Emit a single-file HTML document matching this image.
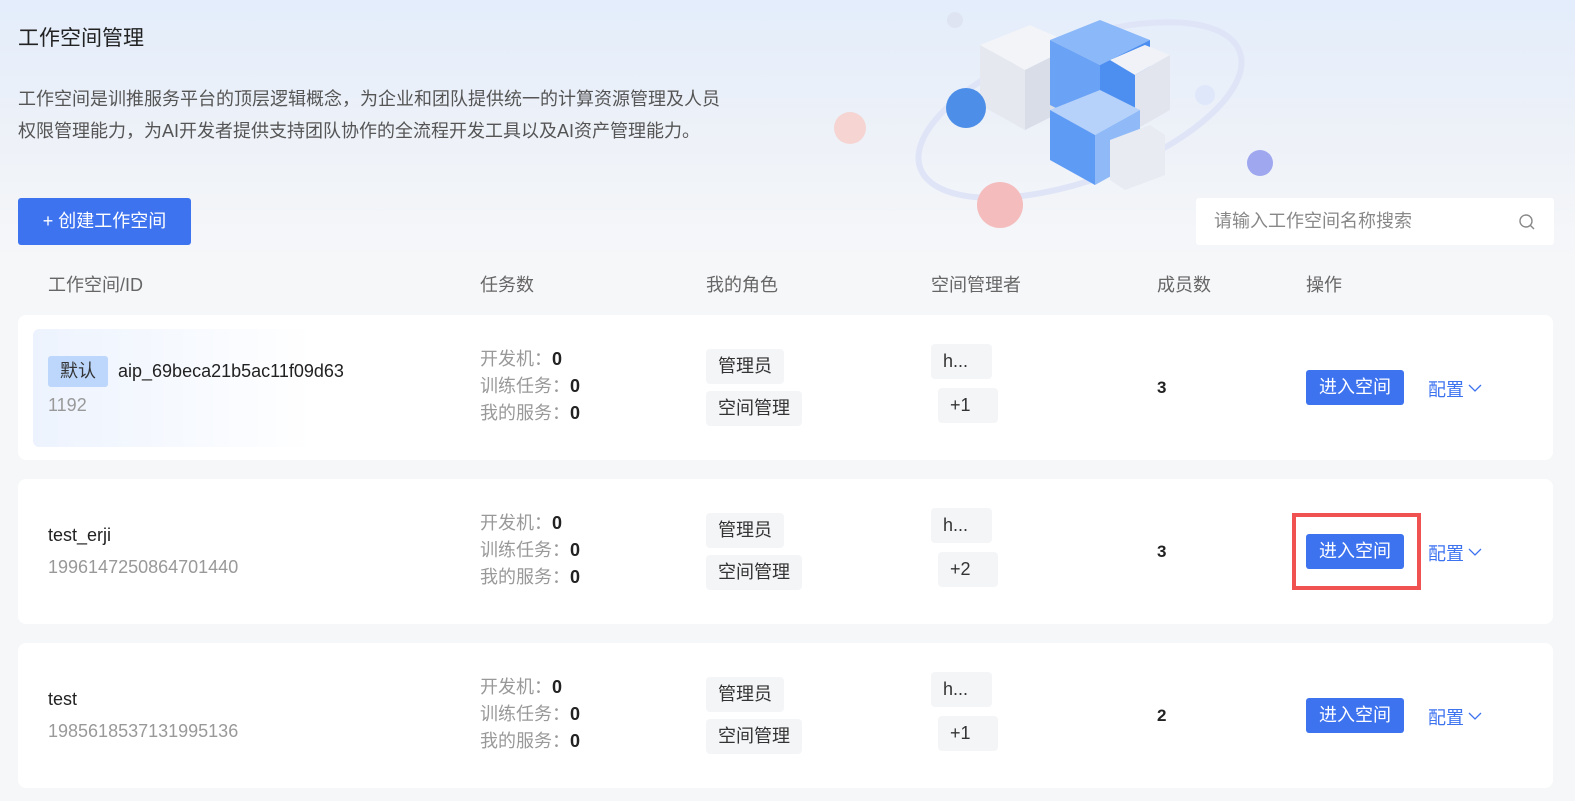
<!DOCTYPE html>
<html><head><meta charset="utf-8"><style>
*{margin:0;padding:0;box-sizing:border-box}
body{width:1575px;height:801px;overflow:hidden;background:#f6f7f9;font-family:"Liberation Sans","Noto Sans CJK SC",sans-serif;color:#333;position:relative}
.hdr{position:absolute;left:0;top:0;width:1575px;height:260px;background:linear-gradient(180deg,#e3edfb 0%,#edf1f8 50%,#f6f7f9 100%)}
.abs{position:absolute}
.title{left:18px;top:22px;font-size:21px;color:#222}
.desc{left:18px;top:83px;font-size:18px;line-height:32px;color:#555}
.btn{left:18px;top:198px;width:173px;height:47px;background:#3e73f0;color:#fff;border-radius:3px;font-size:18px;line-height:47px;text-align:center}
.search{left:1196px;top:198px;width:358px;height:47px;background:#fff;border-radius:3px;font-size:18px;color:#888;line-height:47px;padding-left:18px}
.th{top:271px;font-size:18px;color:#666}
.card{position:absolute;left:18px;width:1535px;height:145px;background:#fff;border-radius:8px}
.name{position:absolute;left:30px;font-size:18px;color:#222}
.id{position:absolute;left:30px;font-size:18px;color:#999}
.stats{position:absolute;left:462px;font-size:18px;line-height:27px;color:#999}
.stats b{color:#222}
.tag{position:absolute;background:#f4f5f7;border-radius:4px;font-size:18px;color:#333;height:35px;line-height:35px;padding:0 12px}
.num{position:absolute;left:1139px;font-size:17px;font-weight:bold;color:#222}
.enter{position:absolute;left:1288px;width:98px;height:35px;background:#3e73f0;color:#fff;border-radius:3px;font-size:18px;line-height:35px;text-align:center}
.cfg{position:absolute;left:1410px;font-size:18px;color:#3e73f0}
.cfg svg{vertical-align:middle;margin-left:4px;margin-top:-6px}
</style></head><body>
<div class="hdr"></div>
<svg class="abs" style="left:820px;top:0" width="470" height="240">
<ellipse cx="260" cy="110" rx="170" ry="70" fill="none" stroke="#dfe5f7" stroke-width="6" transform="rotate(-20 260 110)"/>
<polygon points="160,45 210,25 255,45 205,70" fill="#f3f4f8"/><polygon points="160,45 205,70 205,130 160,105" fill="#e6e8f0"/><polygon points="205,70 255,45 255,105 205,130" fill="#d9dde8"/>
<polygon points="230,40 280,20 330,40 280,65" fill="#8ab8f8"/><polygon points="230,40 280,65 280,130 230,105" fill="#6aa3f5"/><polygon points="280,65 330,40 330,105 280,130" fill="#4d8ff0"/>
<polygon points="290,60 325,45 350,55 315,75" fill="#f0f2f7"/><polygon points="315,75 350,55 350,110 315,130" fill="#e2e5ee"/>
<polygon points="230,110 280,90 320,110 275,135" fill="#b6d2fb"/><polygon points="230,110 275,135 275,185 230,160" fill="#5e9bf5"/><polygon points="275,135 320,110 320,160 275,185" fill="#8fbaf7"/>
<polygon points="290,140 330,125 345,135 345,175 305,190 290,180" fill="#e8ebf2"/>
<circle cx="146" cy="108" r="20" fill="#4d8fe8"/><circle cx="180" cy="205" r="23" fill="#f4bcbc"/><circle cx="30" cy="128" r="16" fill="#f5d4d2"/><circle cx="440" cy="163" r="13" fill="#9fa8ef"/><circle cx="385" cy="95" r="10" fill="#dfe8fb"/><circle cx="135" cy="20" r="8" fill="#dfe4f3"/>
</svg>
<div class="abs title">工作空间管理</div>
<div class="abs desc">工作空间是训推服务平台的顶层逻辑概念，为企业和团队提供统一的计算资源管理及人员<br>权限管理能力，为AI开发者提供支持团队协作的全流程开发工具以及AI资产管理能力。</div>
<div class="abs btn">+ 创建工作空间</div>
<div class="abs search">请输入工作空间名称搜索<svg style="position:absolute;right:18px;top:15px" width="18" height="18"><circle cx="8" cy="8" r="6" fill="none" stroke="#888" stroke-width="1.4"/><line x1="12.5" y1="12.5" x2="16" y2="16" stroke="#888" stroke-width="1.4"/></svg></div>
<div class="abs th" style="left:48px">工作空间/ID</div>
<div class="abs th" style="left:480px">任务数</div>
<div class="abs th" style="left:706px">我的角色</div>
<div class="abs th" style="left:931px">空间管理者</div>
<div class="abs th" style="left:1157px">成员数</div>
<div class="abs th" style="left:1306px">操作</div>

<div class="card" style="top:315px">
<div style="position:absolute;left:15px;top:14px;width:280px;height:118px;border-radius:6px;background:linear-gradient(90deg,#edf3fe,#fff)"></div>
<div style="position:absolute;left:30px;top:41px;width:60px;height:31px;background:#bcd6fc;border-radius:3px;font-size:18px;line-height:31px;text-align:center">默认</div>
<div class="name" style="left:100px;top:46px">aip_69beca21b5ac11f09d63</div>
<div class="id" style="top:80px">1192</div>
<div class="stats" style="top:31px">开发机：<b>0</b><br>训练任务：<b>0</b><br>我的服务：<b>0</b></div>
<div class="tag" style="left:688px;top:34px">管理员</div><div class="tag" style="left:688px;top:76px">空间管理</div>
<div class="tag" style="left:913px;top:29px;width:61px">h...</div><div class="tag" style="left:920px;top:73px;width:60px">+1</div>
<div class="num" style="top:63px">3</div>
<div class="enter" style="top:55px">进入空间</div><div class="cfg" style="top:61px">配置<svg width="14" height="8"><path d="M1 1 L7 7 L13 1" fill="none" stroke="#3e73f0" stroke-width="1.3"/></svg></div>
</div>

<div class="card" style="top:479px">
<div class="name" style="top:46px">test_erji</div>
<div class="id" style="top:78px">1996147250864701440</div>
<div class="stats" style="top:31px">开发机：<b>0</b><br>训练任务：<b>0</b><br>我的服务：<b>0</b></div>
<div class="tag" style="left:688px;top:34px">管理员</div><div class="tag" style="left:688px;top:76px">空间管理</div>
<div class="tag" style="left:913px;top:29px;width:61px">h...</div><div class="tag" style="left:920px;top:73px;width:60px">+2</div>
<div class="num" style="top:63px">3</div>
<div class="enter" style="top:55px">进入空间</div><div class="cfg" style="top:61px">配置<svg width="14" height="8"><path d="M1 1 L7 7 L13 1" fill="none" stroke="#3e73f0" stroke-width="1.3"/></svg></div>
</div>
<div class="abs" style="left:1292px;top:513px;width:129px;height:77px;border:4px solid #f05252"></div>

<div class="card" style="top:643px">
<div class="name" style="top:46px">test</div>
<div class="id" style="top:78px">1985618537131995136</div>
<div class="stats" style="top:31px">开发机：<b>0</b><br>训练任务：<b>0</b><br>我的服务：<b>0</b></div>
<div class="tag" style="left:688px;top:34px">管理员</div><div class="tag" style="left:688px;top:76px">空间管理</div>
<div class="tag" style="left:913px;top:29px;width:61px">h...</div><div class="tag" style="left:920px;top:73px;width:60px">+1</div>
<div class="num" style="top:63px">2</div>
<div class="enter" style="top:55px">进入空间</div><div class="cfg" style="top:61px">配置<svg width="14" height="8"><path d="M1 1 L7 7 L13 1" fill="none" stroke="#3e73f0" stroke-width="1.3"/></svg></div>
</div>
</body></html>
